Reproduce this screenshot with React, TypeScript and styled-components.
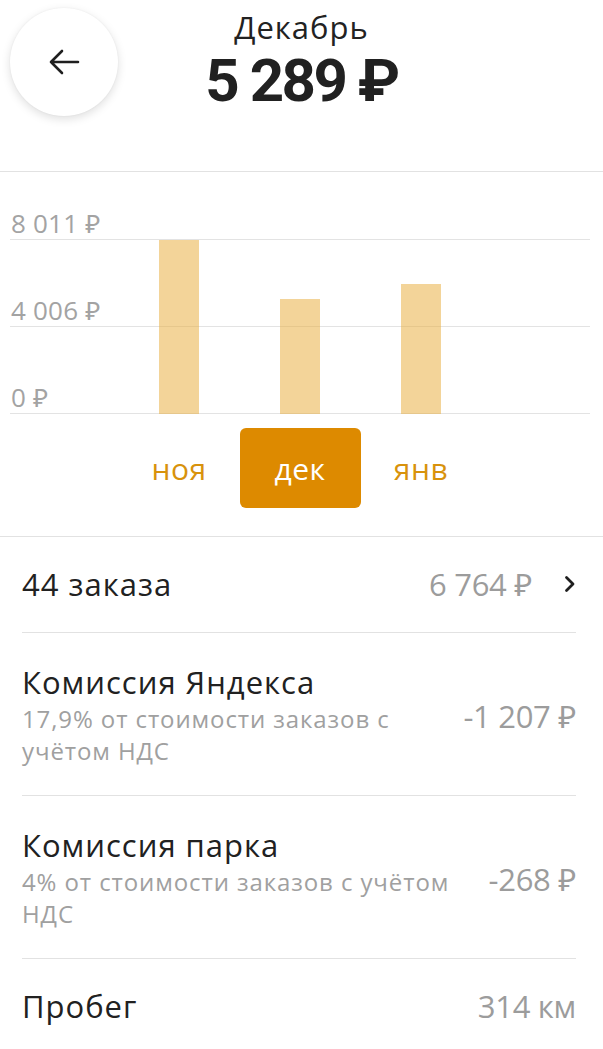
import React from "react"
import styled, { createGlobalStyle } from "styled-components"

const GlobalStyle = createGlobalStyle`
    html, body {
        margin: 0;
        padding: 0;
        background: #ffffff;
    }
    body {
        font-family: "Open Sans", "Noto Sans", sans-serif;
        color: #212121;
    }
`

const MAX_VALUE = 8011
const PLOT_HEIGHT = 174

const months = [
    { label: "ноя", value: 8011 },
    { label: "дек", value: 5289 },
    { label: "янв", value: 5990 },
]

const Page = styled.div`
    width: 603px;
    background: #ffffff;
`

const Header = styled.header`
    display: grid;
    grid-template-columns: 1fr auto 1fr;
    align-items: start;
    height: 163px;
    padding: 8px 10px 0;
    border-bottom: 1px solid #e2e2e2;
`

const BackButton = styled.button`
    display: flex;
    align-items: center;
    justify-content: center;
    width: 108px;
    height: 108px;
    padding: 0;
    border: none;
    border-radius: 50%;
    background: #ffffff;
    box-shadow: 0 3px 10px rgba(0, 0, 0, 0.13), 0 0 2px rgba(0, 0, 0, 0.06);
    cursor: pointer;
`

const TitleBlock = styled.div`
    display: flex;
    flex-direction: column;
    align-items: center;
    padding-top: 1px;
`

const MonthTitle = styled.div`
    font-size: 31px;
    line-height: 36px;
    letter-spacing: 1px;
    color: #222222;
`

const Amount = styled.div`
    margin-top: 6px;
    font-family: Roboto, "Noto Sans", sans-serif;
    font-weight: 700;
    font-size: 60px;
    line-height: 60px;
    letter-spacing: -2.5px;
    white-space: nowrap;
    color: #212121;
`

const ChartSection = styled.section`
    padding: 0 13px 0 10px;
    border-bottom: 1px solid #e2e2e2;
`

const Plot = styled.div`
    position: relative;
`

const Level = styled.div<{ $h: number }>`
    display: flex;
    align-items: flex-end;
    height: ${(p) => p.$h}px;
    box-sizing: border-box;
    border-bottom: 1px solid #e3e3e3;
`

const LevelLabel = styled.span`
    font-size: 26px;
    line-height: 30px;
    padding: 0 0 1px 1px;
    color: #a3a3a3;
    letter-spacing: 0.2px;
    white-space: nowrap;
`

const Bars = styled.div`
    position: absolute;
    left: 0;
    right: 0;
    bottom: 0;
    display: flex;
    justify-content: center;
    align-items: flex-end;
    pointer-events: none;
`

const BarSlot = styled.div`
    display: flex;
    justify-content: center;
    width: 121px;
`

const Bar = styled.div`
    width: 40px;
    background: rgba(232, 172, 60, 0.52);
`

const MonthRow = styled.div`
    display: flex;
    justify-content: center;
    margin-top: 14px;
    padding-bottom: 28px;
`

const MonthTab = styled.div<{ $active?: boolean }>`
    display: flex;
    align-items: center;
    justify-content: center;
    width: 121px;
    height: 80px;
    border-radius: 6px;
    font-size: 30px;
    letter-spacing: 0.5px;
    background: ${(p) => (p.$active ? "#dd8a00" : "transparent")};
    color: ${(p) => (p.$active ? "#ffffff" : "#d8920c")};
`

const List = styled.div`
    padding: 0 27px 0 22px;
`

const Row = styled.div<{ $last?: boolean }>`
    display: flex;
    align-items: center;
    gap: 30px;
    padding: 29px 0 30px;
    border-bottom: ${(p) => (p.$last ? "none" : "1px solid #e2e2e2")};
`

const DetailRow = styled(Row)`
    padding: 31px 0 28px;
`

const RowText = styled.div`
    flex: 1;
    min-width: 0;
`

const RowTitle = styled.div`
    font-size: 31px;
    line-height: 36px;
    letter-spacing: 1px;
    color: #212121;
`

const RowNote = styled.div`
    margin-top: 3px;
    font-size: 24px;
    line-height: 32px;
    letter-spacing: 0.9px;
    color: #a0a0a0;
`

const RowValue = styled.div`
    font-size: 31px;
    line-height: 36px;
    letter-spacing: -0.3px;
    color: #9c9c9c;
    white-space: nowrap;
`

const Chevron = styled.span`
    display: flex;
    margin-left: 2px;
`

const ArrowLeft = () => (
    <svg width="32" height="28" viewBox="0 0 32 28" fill="none">
        <path d="M30 14H3M14 3L3 14l11 11" stroke="#1f1f1f" strokeWidth="2.6" strokeLinecap="round" strokeLinejoin="round" />
    </svg>
)

const ChevronRight = () => (
    <svg width="12" height="18" viewBox="0 0 12 18" fill="none">
        <path d="M2.5 2.5L9 9l-6.5 6.5" stroke="#1f1f1f" strokeWidth="2.8" strokeLinecap="round" strokeLinejoin="round" />
    </svg>
)

const App: React.FC = () =>
{
    return (
        <Page>
            <GlobalStyle />
            <Header>
                <div><BackButton aria-label="Назад"><ArrowLeft /></BackButton></div>
                <TitleBlock>
                    <MonthTitle>Декабрь</MonthTitle>
                    <Amount>5 289 ₽</Amount>
                </TitleBlock>
                <div />
            </Header>

            <ChartSection>
                <Plot>
                    <Level $h={68}><LevelLabel>8 011 ₽</LevelLabel></Level>
                    <Level $h={87}><LevelLabel>4 006 ₽</LevelLabel></Level>
                    <Level $h={87}><LevelLabel>0 ₽</LevelLabel></Level>
                    <Bars>
                        {months.map((m) => (
                            <BarSlot key={m.label}>
                                <Bar style={{ height: Math.round((m.value / MAX_VALUE) * PLOT_HEIGHT) }} />
                            </BarSlot>
                        ))}
                    </Bars>
                </Plot>
                <MonthRow>
                    {months.map((m) => (
                        <MonthTab key={m.label} $active={m.label === "дек"}>{m.label}</MonthTab>
                    ))}
                </MonthRow>
            </ChartSection>

            <List>
                <Row>
                    <RowText><RowTitle>44 заказа</RowTitle></RowText>
                    <RowValue>6 764 ₽</RowValue>
                    <Chevron><ChevronRight /></Chevron>
                </Row>
                <DetailRow>
                    <RowText>
                        <RowTitle>Комиссия Яндекса</RowTitle>
                        <RowNote>17,9% от стоимости заказов с учётом НДС</RowNote>
                    </RowText>
                    <RowValue>-1 207 ₽</RowValue>
                </DetailRow>
                <DetailRow>
                    <RowText>
                        <RowTitle>Комиссия парка</RowTitle>
                        <RowNote>4% от стоимости заказов с учётом НДС</RowNote>
                    </RowText>
                    <RowValue>-268 ₽</RowValue>
                </DetailRow>
                <Row $last>
                    <RowText><RowTitle>Пробег</RowTitle></RowText>
                    <RowValue>314 км</RowValue>
                </Row>
            </List>
        </Page>
    )
}

export default App
